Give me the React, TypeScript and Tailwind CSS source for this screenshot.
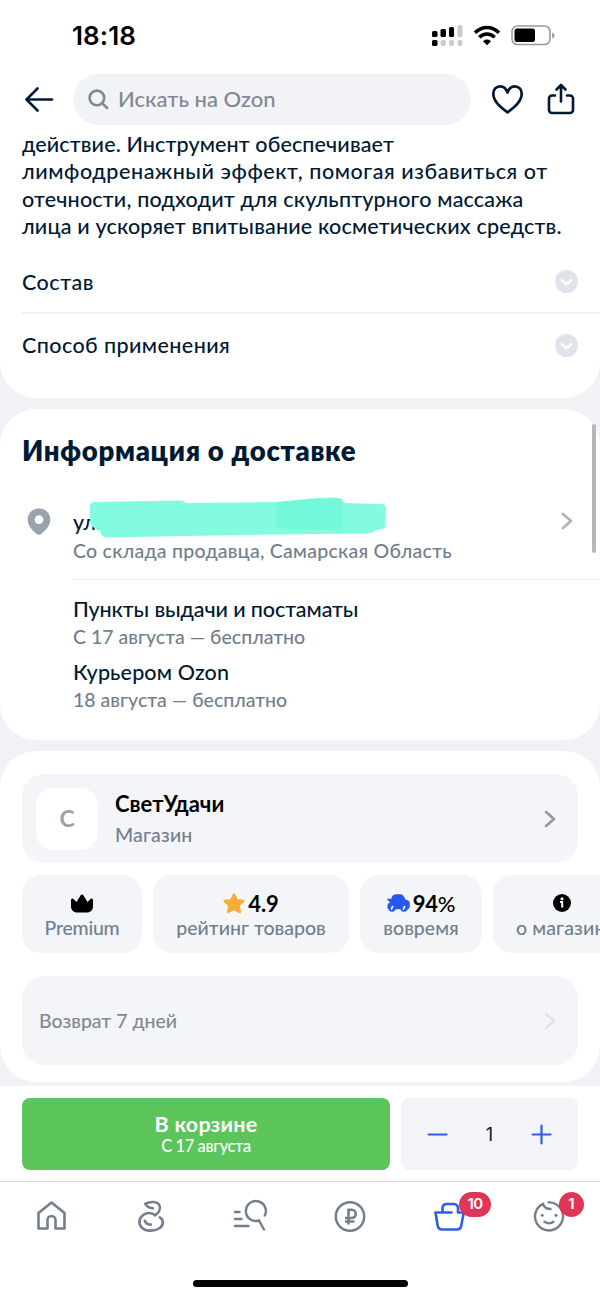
import React from "react";

type RowProps = {
  title: string;
  className: string;
};

type TileProps = {
  className: string;
  label: string;
  labelClass: string;
  children: React.ReactNode;
};

const Chevron = ({ className }: { className: string }) => (
  <svg className={className} width="12" height="18" viewBox="0 0 12 18" fill="none" stroke="currentColor" strokeWidth="2.6" strokeLinecap="round" strokeLinejoin="round">
    <path d="M2 2l8 7-8 7" />
  </svg>
);

const StatusBar = () => (
  <div className="flex h-[74px] items-start justify-between pl-[72px] pr-[45px] pt-[21px]">
    <div className="text-[26px] leading-[30px] font-semibold text-black font-[Inter,sans-serif] tracking-[0.1px]">18:18</div>
    <div className="flex pt-[4px]">
      <svg width="31" height="22" viewBox="0 0 31 22">
        <g fill="#000">
          <rect x="0" y="6" width="5.5" height="6" rx="1.5" />
          <rect x="8.5" y="4" width="5.5" height="8" rx="1.5" />
          <rect x="17" y="2" width="5" height="10" rx="1.5" />
          <rect x="0" y="15" width="5.5" height="6" rx="1.5" />
        </g>
        <g fill="#cbcbcb">
          <rect x="25.5" y="0" width="5" height="12" rx="1.5" />
          <rect x="8.5" y="15" width="5.5" height="6" rx="2" />
          <rect x="17" y="15" width="5" height="6" rx="2" />
          <rect x="25.5" y="15" width="5" height="6" rx="2" />
        </g>
      </svg>
      <svg className="ml-[10px]" width="28" height="22" viewBox="0 0 28 22" fill="none" stroke="#000" strokeWidth="3.5">
        <path d="M2 7.8C9 .6 19 .6 26 7.8" />
        <path d="M6.3 12.3c4.4-4.5 11-4.5 15.4 0" />
        <path d="M10 16.3c2.2-2.3 5.8-2.3 8 0l-4 4z" fill="#000" stroke="none" />
      </svg>
      <svg className="ml-[10px]" width="44" height="22" viewBox="0 0 44 22">
        <rect x="1" y="1" width="38" height="18.5" rx="5.5" fill="none" stroke="#999" strokeWidth="1.6" />
        <rect x="3.5" y="3.5" width="20.5" height="13.5" rx="2.5" fill="#000" />
        <path d="M41.2 7.5c3 1 3 5 0 6z" fill="#999" />
      </svg>
    </div>
  </div>
);

const SearchHeader = () => (
  <div className="flex h-[51px] items-center">
    <svg className="ml-[24px]" width="30" height="26" viewBox="0 0 30 26" fill="none" stroke="#001a34" strokeWidth="2.6" strokeLinecap="round" strokeLinejoin="round">
      <path d="M13.5 1.5L2.5 12.5l11 11M2.5 12.5h25.5" />
    </svg>
    <div className="ml-[19px] flex h-[51px] w-[398px] items-center rounded-full bg-[#f2f3f7] pl-[15px]">
      <svg width="21" height="21" viewBox="0 0 21 21" fill="none" stroke="#808893" strokeWidth="2.6" strokeLinecap="round">
        <circle cx="8.9" cy="8.9" r="7.3" />
        <path d="M14.3 14.3l4.8 4.7" />
      </svg>
      <span className="mb-[1px] ml-[9px] text-[22px] leading-[28px] font-medium text-[#808893]">Искать на Ozon</span>
    </div>
    <svg className="mb-[1px] ml-[20px]" width="34" height="31" viewBox="0 0 34 31" fill="none" stroke="#001a34" strokeWidth="2.7" strokeLinejoin="round">
      <path d="M16.5 8.5C15 4.2 12.2 2.3 9.2 2.3 5 2.3 2.3 5.6 2.3 9.7c0 7.300 6.400 12.800 14.200 18.600C24.3 22.5 30.7 17 30.7 9.7c0-4.100-2.700-7.400-6.900-7.400-3 0-5.800 1.900-7.300 6.200z" />
    </svg>
    <svg className="mb-[1px] ml-[22px]" width="28" height="32" viewBox="0 0 28 32" fill="none" stroke="#001a34" strokeWidth="2.6" strokeLinecap="round" strokeLinejoin="round">
      <path d="M8 12.5H5a3 3 0 0 0-3 3V27a3 3 0 0 0 3 3h18a3 3 0 0 0 3-3V15.5a3 3 0 0 0-3-3h-3M14 18.5V2.5M9.5 6.5L14 2l4.5 4.5" />
    </svg>
  </div>
);

const ExpandRow = ({ title, className }: RowProps) => (
  <div className="flex h-[62px] items-center justify-between pr-[22px] text-[#001a34]">
    <span className={`text-[21.5px] font-medium ${className}`}>{title}</span>
    <svg width="23" height="23" viewBox="0 0 23 23" fill="none">
      <circle cx="11.5" cy="11.5" r="11.5" fill="#e0e3eb" />
      <path d="M7 10.2l4.5 4.3 4.5-4.3" stroke="#fff" strokeWidth="2.6" strokeLinecap="round" strokeLinejoin="round" />
    </svg>
  </div>
);

const Description = () => (
  <div className="h-[273px] rounded-b-[36px] bg-white pl-[22px] pt-[6px]">
    <div className="h-[115px] whitespace-nowrap text-[21.5px] leading-[27.4px] font-medium text-[#001a34]">
      <div className="tracking-[0.12px]">действие. Инструмент обеспечивает</div>
      <div className="tracking-[0.58px]">лимфодренажный эффект, помогая избавиться от</div>
      <div className="tracking-[0.18px]">отечности, подходит для скульптурного массажа</div>
      <div className="tracking-[0.18px]">лица и ускоряет впитывание косметических средств.</div>
    </div>
    <div className="mt-[4px]">
      <ExpandRow title="Состав" className="pt-[2px] tracking-[0.5px]" />
      <div className="h-[2px] bg-[#f0f2f5]" />
      <ExpandRow title="Способ применения" className="tracking-[0.42px]" />
    </div>
  </div>
);

const Delivery = () => (
  <div className="mt-[11px] h-[331px] rounded-[36px] bg-white pl-[22px] pt-[24px]">
    <h2 className="text-[27.5px] leading-[36px] font-extrabold tracking-[0.7px] text-[#001a34]">Информация о доставке</h2>
    <div className="mt-[27px] flex h-[74px]">
      <svg className="ml-[5px] mt-[12px]" width="24" height="27" viewBox="0 0 24 27">
        <path fillRule="evenodd" fill="#9aa2ad" d="M12 .5C5.600.5.700 5.300.700 11.500c0 6.200 4.300 10.700 9.200 14.400a3.500 3.500 0 0 0 4.200 0c4.900-3.700 9.200-8.200 9.200-14.400C23.300 5.300 18.400.5 12 .5zm0 6.700a4.400 4.400 0 1 1 0 8.800 4.400 4.400 0 0 1 0-8.800z" />
      </svg>
      <div className="ml-[22px] flex-1">
        <div className="relative h-[41px] pt-[13px] text-[21.5px] leading-[26px] font-medium text-[#001a34]">
          ул.
          {/* marker strokes over the address */}
          <svg className="absolute left-[15px] top-[1px]" width="300" height="44" viewBox="0 0 300 44">
            <path fill="#83fbe2" d="M5 5Q50 4 92 3.500q4 0 6 2.500l91-1 40-4q22-1.500 25 1l2 4 37 1q5 0 5 5l-.5 17q0 3-9 4l-6 3.500Q220 37 150 38L20 40.500Q13 41 12 34L5 30Q2 28 2 24L2 9Q2 6 5 5z" />
            <path fill="#72f9da" d="M191 5l38-3q22-1.500 25 1l1 24q-1 5-6 6l-56-1q-6-1-6-6l1-17z" />
          </svg>
        </div>
        <div className="mt-[2px] whitespace-nowrap text-[19.5px] leading-[24px] font-medium text-[#707f8d] tracking-[0.26px]">Со склада продавца, Самарская Область</div>
      </div>
      <Chevron className="mr-[27px] mt-[16px] text-[#adb3bc]" />
    </div>
    <div className="ml-[51px] mt-[9px] h-[1px] bg-[#eff1f4]" />
    <div className="ml-[51px] pt-[15px]">
      <div className="text-[21.5px] leading-[28px] font-medium tracking-[-0.1px] text-[#001a34]">Пункты выдачи и постаматы</div>
      <div className="text-[19.5px] leading-[28px] font-medium text-[#707f8d]">С 17 августа — бесплатно</div>
      <div className="mt-[7px] text-[21.5px] leading-[28px] font-medium tracking-[0.15px] text-[#001a34]">Курьером Ozon</div>
      <div className="text-[19.5px] leading-[28px] font-medium text-[#707f8d]">18 августа — бесплатно</div>
    </div>
  </div>
);

const Tile = ({ className, label, labelClass, children }: TileProps) => (
  <div className={`flex h-[78px] shrink-0 flex-col items-center rounded-[19px] bg-[#f4f5f9] pt-[15px] ${className}`}>
    <div className="flex h-[26px] items-center text-[22px] font-bold text-black">{children}</div>
    <div className={`whitespace-nowrap text-[19.5px] leading-[24px] font-medium text-[#707f8d] ${labelClass}`}>{label}</div>
  </div>
);

const Shop = () => (
  <div className="mt-[11px] h-[331px] overflow-hidden rounded-[36px] bg-white pl-[22px] pt-[23px]">
    <div className="mr-[22px] flex h-[89px] items-center rounded-[22px] bg-[#f4f5f9] pl-[14px] pr-[22px]">
      <div className="flex h-[62px] w-[62px] items-center justify-center rounded-[18px] bg-white text-[23px] font-bold text-[#9da1a6]">С</div>
      <div className="ml-[17px] flex-1 pt-[2px]">
        <div className="text-[22px] leading-[30px] font-bold text-black">СветУдачи</div>
        <div className="text-[19.5px] leading-[32px] font-medium tracking-[0.15px] text-[#707f8d]">Магазин</div>
      </div>
      <Chevron className="text-[#96999f]" />
    </div>
    <div className="mt-[12px] flex gap-[11px]">
      <Tile className="w-[120px]" label="Premium" labelClass="tracking-[-0.25px]">
        <svg width="22" height="19" viewBox="0 0 22 19" fill="#000">
          <path d="M0 6.5C0 4.500 1.500 4 2.500 5L5.500 8 9.500 1.500Q11-.5 12.500 1.500L16.500 8l3-3c1-1 2.500-.5 2.500 1.500V12c0 4-2.300 6.500-6.300 6.500H6.300C2.300 18.500 0 16 0 12z" />
        </svg>
      </Tile>
      <Tile className="w-[196px]" label="рейтинг товаров" labelClass="tracking-[0px]">
        <svg className="mr-[3px]" width="22" height="21" viewBox="0 0 22 21" fill="#f5ae37" stroke="#f5ae37" strokeWidth="2.5" strokeLinejoin="round">
          <path d="M11 1.500l2.800 5.700 6.500.8-4.700 4.400 1.200 6.600-5.800-3-5.800 3 1.200-6.600L1.700 8l6.500-.8z" />
        </svg>
        <span>4.9</span>
      </Tile>
      <Tile className="w-[122px]" label="вовремя" labelClass="tracking-[0px]">
        <svg className="mr-[3px]" width="23" height="18" viewBox="0 0 23 18">
          <path fill="#2757ef" d="M5 3Q6 .2 9 .2h4.500q2 0 3 1.800L18.500 5.500q4 .5 4.300 4v3q0 2-2 2.800H2Q.4 15 .4 13L1 9.500l3-1.300H2V6.500H.3V4.700h3.900z" />
          <circle cx="5" cy="14" r="3.7" fill="#2757ef" />
          <circle cx="17" cy="14" r="3.7" fill="#2757ef" />
          <path d="M4.500 15l1-2.300M16.500 15l1-2.300" stroke="#f4f5f9" strokeWidth="1.8" strokeLinecap="round" />
        </svg>
        <span className="tracking-[-0.3px]">94<span className="font-medium">%</span></span>
      </Tile>
      <Tile className="w-[137px]" label="о магазине" labelClass="pl-[9px] tracking-[0.15px]">
        <svg width="18" height="18" viewBox="0 0 18 18">
          <circle cx="9" cy="9" r="9" fill="#000" />
          <circle cx="9" cy="4.7" r="1.5" fill="#fff" />
          <path d="M7 8h2.200v5.500" fill="none" stroke="#fff" strokeWidth="2" />
        </svg>
      </Tile>
    </div>
    <div className="mr-[22px] mt-[23px] flex h-[89px] items-center justify-between rounded-[22px] bg-[#f4f5f9] pl-[17px] pr-[22px]">
      <span className="text-[19.5px] font-medium text-[#808893]">Возврат 7 дней</span>
      <Chevron className="text-[#dfe2e8]" />
    </div>
  </div>
);

const CartBar = () => (
  <div className="mt-[4px] flex h-[95px] gap-[11px] bg-white pl-[22px] pt-[12px]">
    <div className="flex h-[72px] w-[368px] flex-col items-center rounded-[8px] bg-[#5bc45b] pt-[13px] text-white">
      <div className="text-[21.5px] leading-[26px] font-bold tracking-[0.2px]">В корзине</div>
      <div className="text-[16.5px] leading-[19px] font-medium tracking-[-0.4px]">С 17 августа</div>
    </div>
    <div className="flex h-[72px] w-[177px] items-center justify-between rounded-[8px] bg-[#f2f4f8] pl-[26px] pr-[26px]">
      <svg width="21" height="21" viewBox="0 0 21 21" stroke="#2f5de6" strokeWidth="2.2" strokeLinecap="round">
        <path d="M1.500 10.500h18" />
      </svg>
      <span className="font-[Inter,sans-serif] text-[18px] text-[#001a34]">1</span>
      <svg width="21" height="21" viewBox="0 0 21 21" stroke="#2f5de6" strokeWidth="2.2" strokeLinecap="round">
        <path d="M1.500 10.500h18M10.500 1.500v18" />
      </svg>
    </div>
  </div>
);

const TabBar = () => (
  <div className="h-[116px] border-t border-[#d9d9df] bg-white">
    <div className="grid grid-cols-6 pt-[17px] text-[#747f8b]">
      <div className="flex justify-center">
        <svg width="34" height="34" viewBox="0 0 34 34" fill="none" stroke="currentColor" strokeWidth="2.6" strokeLinejoin="round">
          <path d="M5.500 29.500V14L18.500 3.500l13 10.500v15.500H22.500V21a4 4 0 0 0-8 0v8.500z" />
        </svg>
      </div>
      <div className="flex justify-center">
        <svg width="34" height="34" viewBox="0 0 34 34" fill="none" stroke="currentColor" strokeWidth="2.6" strokeLinecap="round">
          <path d="M20 9.200C16.500 9 13.500 7.500 12.300 4.800C17 2.300 24.500 2 26.500 6.500C28 10 25.500 14 22 16.300C19 13.500 14 13.300 10.500 15.800C6 19 5 24.500 8.500 28.300C12.500 32.500 21 32.600 26 29.500C31 26.500 31 20.500 26.800 18.300M11.800 21.800c1 2.500 3 4 6 3.800" />
        </svg>
      </div>
      <div className="flex justify-center">
        <svg width="36" height="34" viewBox="0 0 36 34" fill="none" stroke="currentColor" strokeWidth="2.4" strokeLinecap="round">
          <path d="M32.800 16.500A10 10 0 1 0 27 21.500L32 30.500M3 13h4.500M3 20h6.500M3 27h13.500" />
        </svg>
      </div>
      <div className="flex justify-center">
        <svg width="34" height="34" viewBox="0 0 34 34" fill="none" stroke="currentColor" strokeWidth="2.5">
          <circle cx="17" cy="17.5" r="14.2" />
          <path d="M15.500 25.500V10.800h3.200a4.100 4.100 0 0 1 0 8.200H12M12 22.500h9.500" strokeWidth="2.6" />
        </svg>
      </div>
      <div className="relative flex justify-center text-[#2f5de6]">
        <svg width="34" height="34" viewBox="0 0 34 34" fill="none" stroke="currentColor" strokeWidth="2.6" strokeLinecap="round" strokeLinejoin="round">
          <path d="M18.500 13.500H2.500l2.200 13.200q.7 3.800 4.500 3.800h14.500q3.800 0 4.500-3.800l2.600-13.200H25V9.500q0-4.500-4.500-4.500H14Q9.500 5 9.500 9.500v4" />
        </svg>
        <span className="absolute left-[59px] top-[-7px] flex h-[25px] w-[32px] items-center justify-center rounded-full bg-[#e13558] font-[Inter,sans-serif] text-[15px] font-semibold tracking-[-0.5px] text-white">10</span>
      </div>
      <div className="relative flex justify-center">
        <svg width="34" height="34" viewBox="0 0 34 34" fill="none" stroke="currentColor" strokeWidth="2.4" strokeLinecap="round">
          <path d="M10 4.800A14 14 0 1 0 29.600 14M10 4.800C11 8 13.500 10 17.500 10M15.500 3.400C22 3 27.500 7 29.500 13.500M11.500 22.700c2.500 2.200 6.500 2.200 9 0" />
          <g fill="currentColor" stroke="none">
            <circle cx="9.2" cy="16.3" r="1.5" />
            <circle cx="23" cy="16.3" r="1.5" />
          </g>
        </svg>
        <span className="absolute left-[59px] top-[-7px] flex h-[25px] w-[25px] items-center justify-center rounded-full bg-[#e13558] font-[Inter,sans-serif] text-[15px] font-semibold text-white">1</span>
      </div>
    </div>
    <div className="mx-auto mt-[47px] h-[7px] w-[215px] rounded-full bg-black" />
  </div>
);

const App = () => {
  return (
    <div className="relative h-[1297px] w-[600px] overflow-hidden bg-[#f1f2f6] font-[Lato,'Open_Sans',sans-serif]">
      <div className="bg-white">
        <StatusBar />
        <SearchHeader />
      </div>
      <Description />
      <Delivery />
      <Shop />
      <CartBar />
      <TabBar />
      <div className="absolute left-[592px] top-[424px] h-[129px] w-[4px] rounded-full bg-[#b7b7b7]" />
    </div>
  );
};

export default App;
